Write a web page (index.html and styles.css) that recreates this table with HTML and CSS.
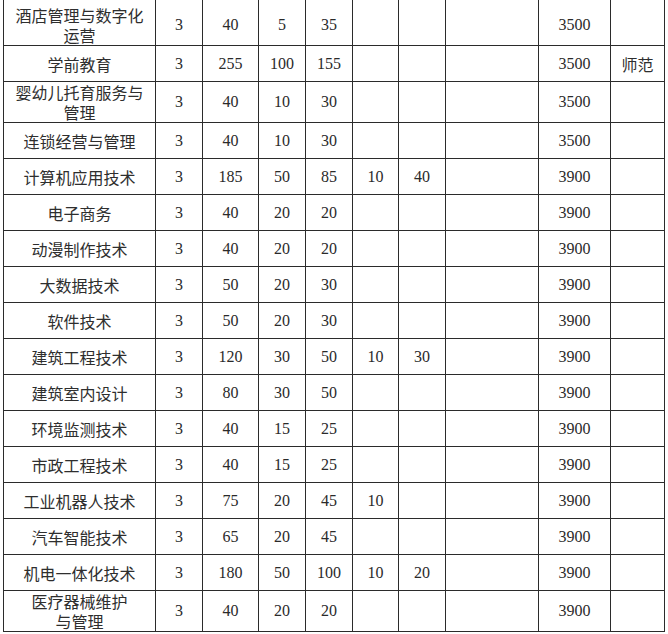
FILE: index.html
```html
<!DOCTYPE html>
<html lang="zh">
<head>
<meta charset="utf-8">
<link rel="stylesheet" href="styles.css">
</head>
<body>
<table class="plan">
  <colgroup>
    <col class="c-name"><col class="c-yr"><col class="c-n1"><col class="c-n2"><col class="c-n3"><col class="c-n4"><col class="c-n5"><col class="c-n6"><col class="c-fee"><col class="c-note">
  </colgroup>
  <tbody>
    <tr class="r-first"><td class="name">酒店管理与数字化<br>运营</td><td>3</td><td>40</td><td>5</td><td>35</td><td></td><td></td><td></td><td>3500</td><td></td></tr>
    <tr><td class="name">学前教育</td><td>3</td><td>255</td><td>100</td><td>155</td><td></td><td></td><td></td><td>3500</td><td class="name">师范</td></tr>
    <tr class="r-two"><td class="name">婴幼儿托育服务与<br>管理</td><td>3</td><td>40</td><td>10</td><td>30</td><td></td><td></td><td></td><td>3500</td><td></td></tr>
    <tr><td class="name">连锁经营与管理</td><td>3</td><td>40</td><td>10</td><td>30</td><td></td><td></td><td></td><td>3500</td><td></td></tr>
    <tr><td class="name">计算机应用技术</td><td>3</td><td>185</td><td>50</td><td>85</td><td>10</td><td>40</td><td></td><td>3900</td><td></td></tr>
    <tr><td class="name">电子商务</td><td>3</td><td>40</td><td>20</td><td>20</td><td></td><td></td><td></td><td>3900</td><td></td></tr>
    <tr><td class="name">动漫制作技术</td><td>3</td><td>40</td><td>20</td><td>20</td><td></td><td></td><td></td><td>3900</td><td></td></tr>
    <tr><td class="name">大数据技术</td><td>3</td><td>50</td><td>20</td><td>30</td><td></td><td></td><td></td><td>3900</td><td></td></tr>
    <tr><td class="name">软件技术</td><td>3</td><td>50</td><td>20</td><td>30</td><td></td><td></td><td></td><td>3900</td><td></td></tr>
    <tr><td class="name">建筑工程技术</td><td>3</td><td>120</td><td>30</td><td>50</td><td>10</td><td>30</td><td></td><td>3900</td><td></td></tr>
    <tr><td class="name">建筑室内设计</td><td>3</td><td>80</td><td>30</td><td>50</td><td></td><td></td><td></td><td>3900</td><td></td></tr>
    <tr><td class="name">环境监测技术</td><td>3</td><td>40</td><td>15</td><td>25</td><td></td><td></td><td></td><td>3900</td><td></td></tr>
    <tr><td class="name">市政工程技术</td><td>3</td><td>40</td><td>15</td><td>25</td><td></td><td></td><td></td><td>3900</td><td></td></tr>
    <tr><td class="name">工业机器人技术</td><td>3</td><td>75</td><td>20</td><td>45</td><td>10</td><td></td><td></td><td>3900</td><td></td></tr>
    <tr><td class="name">汽车智能技术</td><td>3</td><td>65</td><td>20</td><td>45</td><td></td><td></td><td></td><td>3900</td><td></td></tr>
    <tr><td class="name">机电一体化技术</td><td>3</td><td>180</td><td>50</td><td>100</td><td>10</td><td>20</td><td></td><td>3900</td><td></td></tr>
    <tr class="r-last"><td class="name">医疗器械维护<br>与管理</td><td>3</td><td>40</td><td>20</td><td>20</td><td></td><td></td><td></td><td>3900</td><td></td></tr>
  </tbody>
</table>
</body>
</html>
```
FILE: styles.css
```css
html, body {
  margin: 0;
  padding: 0;
  background: #ffffff;
}

body {
  padding-left: 3px;
}

.plan {
  border-collapse: collapse;
  table-layout: fixed;
  width: 661px;
  color: #2a2a2a;
  font-family: "Liberation Serif", "Noto Sans CJK SC", serif;
  font-size: 16px;
}

.c-name { width: 152px; }
.c-yr { width: 47px; }
.c-n1 { width: 56px; }
.c-n2 { width: 47px; }
.c-n3 { width: 47px; }
.c-n4 { width: 46px; }
.c-n5 { width: 47px; }
.c-n6 { width: 93px; }
.c-fee { width: 72px; }
.c-note { width: 54px; }

.plan td {
  border: 1px solid #2b2b2b;
  padding: 0;
  height: 35px;
  text-align: center;
  vertical-align: middle;
  line-height: 20px;
}

.plan td.name {
  font-family: "Noto Sans CJK SC", sans-serif;
  font-size: 16px;
  color: #2e2e2e;
}

.plan tr.r-first td {
  border-top: none;
  height: 40px;
  padding-top: 5px;
}

.plan tr.r-two td {
  height: 40px;
}

.plan tr.r-last td {
  height: 39px;
}
```
